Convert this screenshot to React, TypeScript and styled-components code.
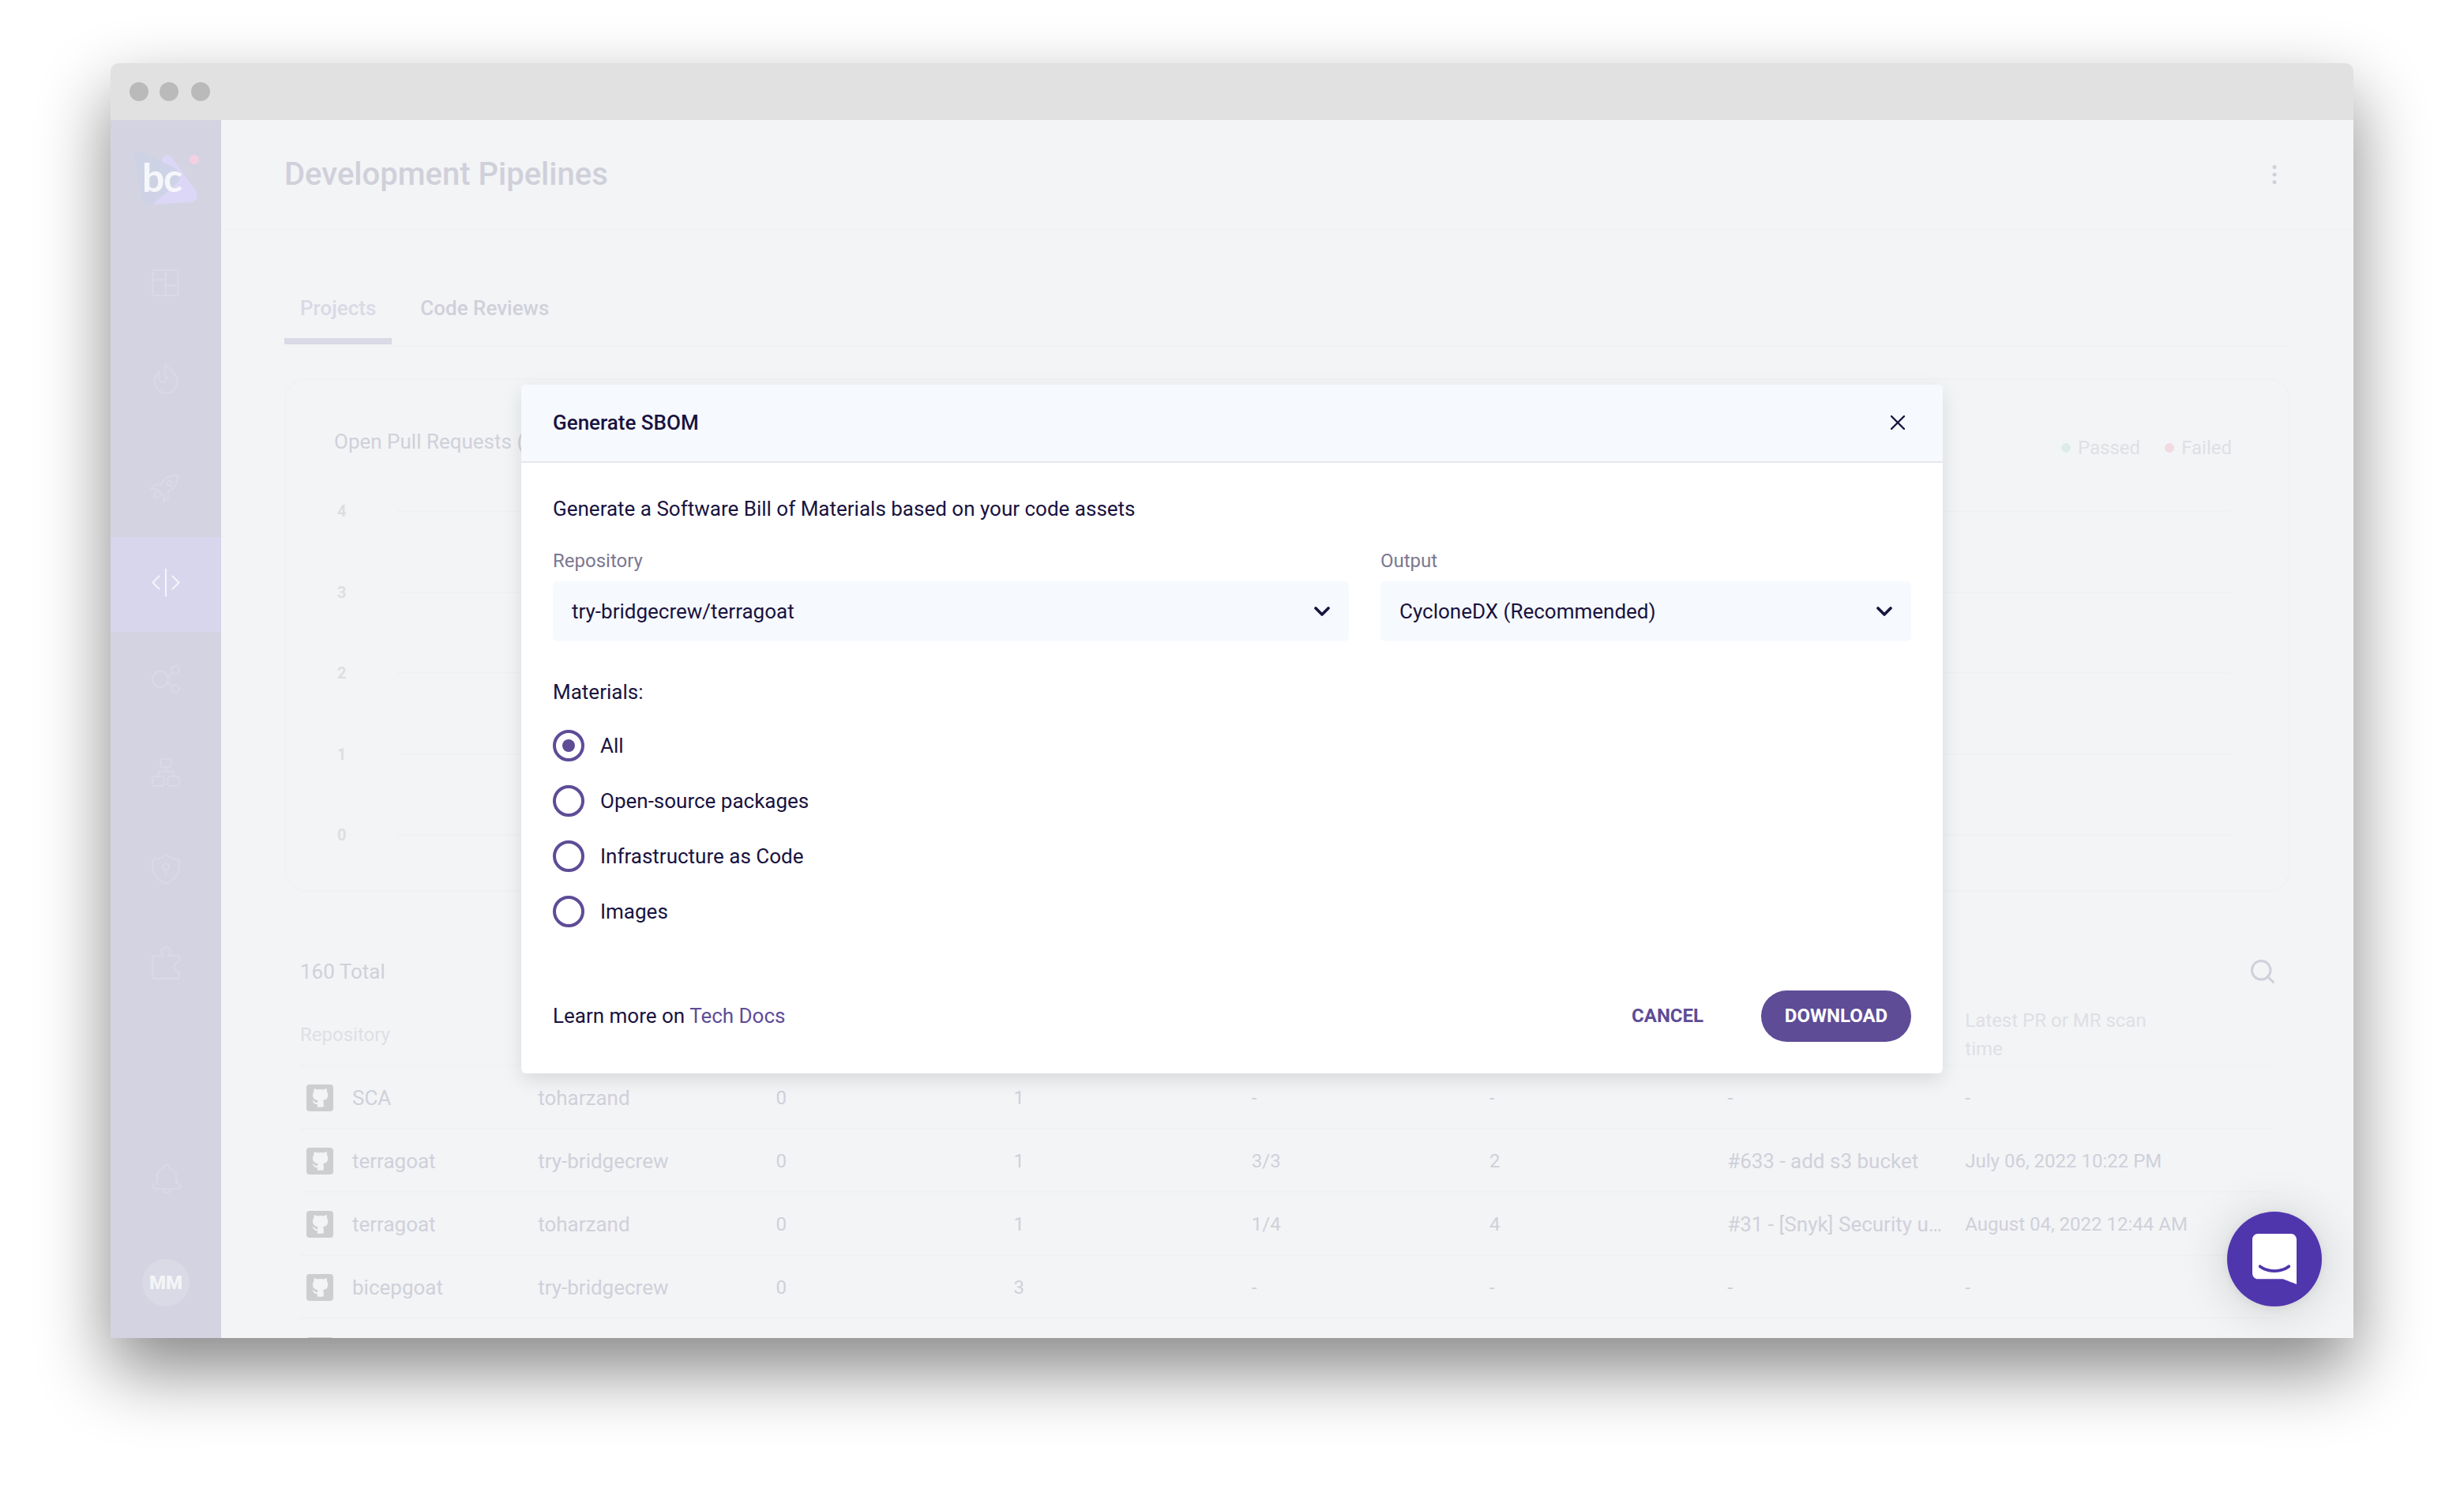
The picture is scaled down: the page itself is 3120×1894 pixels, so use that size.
import React, { useState } from "react";
import styled, { createGlobalStyle } from "styled-components";

const GlobalStyle = createGlobalStyle`
    *{
        box-sizing: border-box;
    }

    body{
        margin: 0;
        background: #ffffff;
        font-family: Roboto, "Liberation Sans", sans-serif;
        font-size: 26px;
        line-height: 36px;
        overflow: hidden;
    }

    button{
        font-family: inherit;
        border: none;
        background: none;
        padding: 0;
        cursor: pointer;
    }
`;

const Page = styled.div`
    height: 1894px;
    padding: 80px 140px 200px;
    background: #ffffff;
`;

const BrowserWindow = styled.div`
    display: flex;
    flex-direction: column;
    height: 1614px;
    border-radius: 10px 10px 0 0;
    box-shadow: 0 40px 90px rgba(0, 0, 0, 0.48);
`;

const TitleBar = styled.div`
    display: flex;
    align-items: center;
    height: 72px;
    padding-left: 24px;
    background: #e1e1e1;
    border-radius: 10px 10px 0 0;
`;

const WindowDot = styled.span`
    width: 24px;
    height: 24px;
    margin-right: 14px;
    border-radius: 50%;
    background: #bababa;

    &:last-child{
        margin-left: 2px;
    }
`;

const Screen = styled.div`
    position: relative;
    display: flex;
    flex: 1;
    min-height: 0;
    overflow: hidden;
    background: #f3f4f6;
`;

const Sidebar = styled.nav`
    display: flex;
    flex-direction: column;
    align-items: center;
    width: 140px;
    height: 1542px;
    flex-shrink: 0;
    background: #d4d3e1;
`;

const LogoBox = styled.div`
    width: 84px;
    height: 146px;
    padding-top: 38px;
`;

const SideItem = styled.div<{ $active?: boolean; $after?: number }>`
    display: flex;
    align-items: center;
    justify-content: center;
    width: 140px;
    height: 120px;
    flex-shrink: 0;
    margin-bottom: ${({ $after }) => $after || 0}px;
    color: ${({ $active }) => ($active ? "#f4f4f9" : "#dad9e7")};
    background: ${({ $active }) => ($active ? "#d8d6ec" : "transparent")};
`;

const SideIcon = styled.svg`
    display: block;
    fill: none;
    stroke: currentColor;
    stroke-width: 2.2;
    stroke-linejoin: round;
    stroke-linecap: round;
    overflow: visible;
`;

const Avatar = styled.div`
    display: flex;
    align-items: center;
    justify-content: center;
    width: 60px;
    height: 60px;
    margin-top: 41px;
    border-radius: 50%;
    background: #dad9e6;
    color: #f3f4f6;
    font-size: 24px;
    font-weight: 900;
`;

const Main = styled.main`
    flex: 1;
    min-width: 0;
    height: 1542px;
    overflow: hidden;
    color: #d0d0da;
`;

const PageHeader = styled.header`
    display: flex;
    align-items: center;
    justify-content: space-between;
    height: 140px;
    padding: 0 97px 0 80px;
    border-bottom: 2px solid #f1f2f4;
`;

const Title = styled.h1`
    margin: 0;
    font-size: 40px;
    font-weight: 500;
    line-height: 48px;
`;

const Content = styled.div`
    padding: 80px 80px 0;
`;

const Tabs = styled.div`
    display: flex;
    gap: 16px;
    padding-bottom: 1px;
    border-bottom: 2px solid #f0f1f3;
`;

const Tab = styled.div<{ $active?: boolean }>`
    padding: 0 20px 20px;
    font-weight: 500;
    color: ${({ $active }) => ($active ? "#dad9e6" : "#d0d0da")};
    border-bottom: 8px solid ${({ $active }) => ($active ? "#dad9e6" : "transparent")};
`;

const ChartCard = styled.section`
    height: 650px;
    margin-top: 40px;
    padding: 60px 72px 0 61px;
    border: 2px solid #f0f1f3;
    border-radius: 28px;
`;

const ChartHead = styled.div`
    display: flex;
    align-items: flex-start;
    justify-content: space-between;
    height: 54.75px;
`;

const Legend = styled.div`
    display: flex;
    gap: 31px;
    padding-top: 8px;
    font-size: 24px;
    color: #dfdfe5;
`;

const LegendItem = styled.span<{ $dot: string }>`
    display: flex;
    align-items: center;
    gap: 9px;

    &::before{
        content: "";
        width: 12px;
        height: 12px;
        border-radius: 50%;
        background: ${({ $dot }) => $dot};
    }
`;

const AxisRow = styled.div`
    display: flex;
    align-items: center;
    height: 102.5px;
    padding-left: 4px;
    font-size: 20px;
    font-weight: 700;
    color: #dddee1;

    &::after{
        content: "";
        flex: 1;
        height: 2px;
        background: #f0f1f3;
    }
`;

const AxisLabel = styled.span`
    width: 76px;
`;

const ListSection = styled.section`
    margin-top: 83px;
    padding: 0 20px;
`;

const ListBar = styled.div`
    display: flex;
    align-items: center;
    justify-content: space-between;
    height: 36px;
    margin-bottom: 24px;
`;

const Row = styled.div<{ $head?: boolean }>`
    display: grid;
    grid-template-columns: repeat(8, 301.2px);
    align-items: center;
    height: ${({ $head }) => ($head ? 78 : 80)}px;
    border-bottom: 2px solid #f0f1f3;
    font-size: ${({ $head }) => ($head ? 24 : 26)}px;
    color: ${({ $head }) => ($head ? "#dfdfe5" : "#d0d0da")};
`;

const Cell = styled.span<{ $small?: boolean }>`
    padding-top: 2px;
    white-space: nowrap;
    font-size: ${({ $small }) => ($small ? "24px" : "inherit")};
`;

const HeadCell = styled.span<{ $column: number }>`
    grid-column: ${({ $column }) => $column};
    padding-right: 50px;
`;

const RepoCell = styled.span`
    display: flex;
    align-items: center;
    gap: 24px;
    padding: 2px 0 0 8px;
`;

const Overlay = styled.div`
    position: absolute;
    inset: 0;
    display: flex;
    align-items: center;
    justify-content: center;
`;

const Modal = styled.div`
    width: 1800px;
    border-radius: 6px;
    background: #ffffff;
    color: #19133f;
    box-shadow: 0 8px 24px rgba(0, 0, 0, 0.11);
`;

const ModalHeader = styled.div`
    display: flex;
    align-items: center;
    justify-content: space-between;
    height: 99px;
    padding: 0 48px 1px 40px;
    border-radius: 6px 6px 0 0;
    border-bottom: 2px solid #e5e7ec;
    background: #f6f9fe;
    font-weight: 500;
`;

const CloseButton = styled.button`
    display: flex;
    color: inherit;
`;

const ModalBody = styled.div`
    padding: 40px;
`;

const Fields = styled.div`
    display: grid;
    grid-template-columns: 1008px 672px;
    column-gap: 40px;
    margin-top: 34px;
    width: 1720px;
`;

const FieldLabel = styled.div`
    margin-bottom: 12px;
    font-size: 24px;
    line-height: 28px;
    color: #7b7892;
`;

const SelectBox = styled.div`
    display: flex;
    align-items: center;
    justify-content: space-between;
    height: 76px;
    padding: 0 24px;
    border-radius: 6px;
    background: #f6f9fe;
`;

const Materials = styled.div`
    margin: 46px 0 30px;
`;

const RadioList = styled.div`
    display: flex;
    flex-direction: column;
    gap: 30px;
`;

const RadioRow = styled.div`
    display: flex;
    align-items: center;
    gap: 20px;
    height: 40px;
    cursor: pointer;
`;

const RadioCircle = styled.span<{ $checked: boolean }>`
    display: flex;
    align-items: center;
    justify-content: center;
    width: 40px;
    height: 40px;
    border: 4px solid #5e4c97;
    border-radius: 50%;

    &::after{
        content: "";
        width: 16px;
        height: 16px;
        border-radius: 50%;
        background: ${({ $checked }) => ($checked ? "#5e4c97" : "transparent")};
    }
`;

const ModalFooter = styled.div`
    display: flex;
    align-items: center;
    justify-content: space-between;
    height: 65px;
    margin-top: 80px;
`;

const FooterText = styled.span`
    padding-bottom: 1px;
`;

const DocsLink = styled.span`
    color: #5e4c97;
`;

const Actions = styled.div`
    display: flex;
    align-items: center;
    gap: 73px;
`;

const CancelButton = styled.button`
    padding-bottom: 1px;
    font-size: 24px;
    font-weight: 700;
    color: #5e4c97;
`;

const DownloadButton = styled.button`
    width: 190px;
    height: 65px;
    padding-bottom: 1px;
    border-radius: 33px;
    background: #5e4c97;
    color: #ffffff;
    font-size: 24px;
    font-weight: 700;
`;

const ChatButton = styled.button`
    position: absolute;
    right: 40px;
    bottom: 40px;
    display: flex;
    align-items: center;
    justify-content: center;
    width: 120px;
    height: 120px;
    border-radius: 50%;
    background: #5036ad;
    box-shadow: 0 2px 12px rgba(0, 0, 0, 0.06), 0 4px 64px rgba(0, 0, 0, 0.16);
`;

const Logo = () => (
    <svg width="84" height="72" viewBox="0 0 84 72">
        <path d="M37 12C40 5 47 5 51 11L79 50C84 57 82 64 74 66L26 69Z" fill="#dcd7f6" />
        <path d="M2 10C2 3 8 1 15 4L52 22C61 27 62 35 56 42L28 66C22 71 14 69 12 61Z" fill="#cbd2e4" fillOpacity="0.85" />
        <text x="12" y="53" fontFamily="Lato, sans-serif" fontWeight="700" fontSize="50" letterSpacing="-1.5" fill="#f6f7fb">bc</text>
        <circle cx="78" cy="12" r="6" fill="#f5d0e0" />
    </svg>
);

const GithubBadge = () => (
    <svg width="34" height="34" viewBox="0 0 34 34">
        <rect width="34" height="34" rx="4" fill="#cdcecf" />
        <path d="M10 5.2C11 5.2 12.2 5.7 13.2 6.4Q17.7 5.6 22.2 6.4C23.2 5.7 24.4 5.2 25.6 5.2Q26.4 7.4 26 9.2C27 10.6 27.4 12 27.2 14C27 18 24.6 19.7 20.8 20.3Q21.8 21.3 21.8 23V28.2Q17.7 29.3 13.8 28.6V25C11 25.4 10 24.4 9.2 22.8Q8.4 21.4 6.8 20.8C8.8 20 10 21 10.8 22.2Q12 23.4 14 22.8Q14 21.3 14.8 20.3C11 19.7 8.2 18 8 14C7.8 12 8.4 10.6 9.4 9.2Q9.2 7 10 5.2Z" fill="#f3f4f6" />
    </svg>
);

const Chevron = () => (
    <svg width="20" height="12" viewBox="0 0 20 12">
        <path d="M2 2L10 10L18 2" fill="none" stroke="#19133f" strokeWidth="3.6" strokeLinecap="round" strokeLinejoin="round" />
    </svg>
);

const rows = [
    ["SCA", "toharzand", "0", "1", "-", "-", "-", "-"],
    ["terragoat", "try-bridgecrew", "0", "1", "3/3", "2", "#633 - add s3 bucket", "July 06, 2022 10:22 PM"],
    ["terragoat", "toharzand", "0", "1", "1/4", "4", "#31 - [Snyk] Security u…", "August 04, 2022 12:44 AM"],
    ["bicepgoat", "try-bridgecrew", "0", "3", "-", "-", "-", "-"],
    ["", "", "", "", "", "", "", ""],
];

const materials = ["All", "Open-source packages", "Infrastructure as Code", "Images"];

// owner and PR name keep the row size, the other cells are smaller
const largeCells = [0, 5];

const SideMenu = () => (
    <Sidebar>
        <LogoBox><Logo /></LogoBox>
        <SideItem $after={2}>
            <SideIcon width="36" height="36" viewBox="0 0 36 36">
                <rect x="1.5" y="2" width="32" height="32" rx="1.5" />
                <path d="M17.7 2V33M2 14.3H17.7M17.7 21.3H33" />
            </SideIcon>
        </SideItem>
        <SideItem $after={20}>
            <SideIcon width="36" height="40" viewBox="0 0 36 40">
                <path d="M18 2c-1 3-3 7-1.5 11 1 2 2.5 3.5 2.5 6a5 5 0 0 1-10 0c0-3 1-5 .8-8.5C6 13 3.6 18 3.6 23a14.6 14.6 0 0 0 29.2 0C32.8 16 27 11 23 7 20.5 4.5 19 3.5 18 2z" />
            </SideIcon>
        </SideItem>
        <SideItem>
            <SideIcon width="40" height="40" viewBox="0 -1 40 40">
                <path d="M35 1C26 .5 18 3 14 12.7L7.5 12 1 18C6 17.6 9 18.6 11.5 20.5L17.5 26.3V34.5L23 28.5V21C31 17.5 35.500 10 35 1z" />
                <circle cx="24.7" cy="11" r="3" />
                <path d="M10 20.700C7 22 5 25 5.500 29.500 10 29.500 13 28 14 24" />
            </SideIcon>
        </SideItem>
        <SideItem $active>
            <SideIcon width="36" height="40" viewBox="0 0 36 40">
                <path d="M9.5 9.5l-8 8 8 8M26.5 9.5l8 8-8 8M18 .8V34.5" />
            </SideIcon>
        </SideItem>
        <SideItem>
            <SideIcon width="36" height="36" viewBox="0 0 36 36">
                <circle cx="11" cy="18" r="10" />
                <circle cx="30" cy="6" r="5" />
                <circle cx="30" cy="30" r="5" />
                <path d="M20.5 15L26.5 9.7M20 21.8L26.5 27" />
            </SideIcon>
        </SideItem>
        <SideItem>
            <SideIcon width="36" height="40" viewBox="0 0 36 40">
                <rect x="11.5" y="1" width="13" height="10.5" rx="2.5" />
                <rect x="1" y="23" width="14.5" height="12" rx="2.5" />
                <rect x="20.5" y="23" width="14.5" height="12" rx="2.5" />
                <path d="M18 12V17M8.3 22.5V17H28V22.5" />
            </SideIcon>
        </SideItem>
        <SideItem>
            <SideIcon width="36" height="40" viewBox="0 0 36 40">
                <path d="M18 1.5C14 5.5 10 8 3 8a2 2 0 0 0-2 2V16C1 28 9 35 18 38.5 27 35 35 28 35 16V10a2 2 0 0 0-2-2C26 8 22 5.5 18 1.5z" />
                <circle cx="18" cy="17.3" r="4" />
                <path d="M18 21.5V28" />
            </SideIcon>
        </SideItem>
        <SideItem $after={153}>
            <SideIcon width="36" height="40" viewBox="0 0 36 40">
                <path d="M1 12a2 2 0 0 1 2-2H14.7A5.9 5.9 0 1 1 21.3 10H33a2 2 0 0 1 2 2V17.5C26.6 19.5 26.6 29.8 35 31.5V37a2 2 0 0 1-2 2H3a2 2 0 0 1-2-2z" />
            </SideIcon>
        </SideItem>
        <SideItem>
            <SideIcon width="36" height="40" viewBox="0 0 36 40">
                <path d="M15.5 6C15.5 .2 22.5 .2 22.5 6 28 7.5 31 11.5 31 17V24.5C34 24.5 36 26 36 28.5S34 32 32 32H6C3.5 32 2 30.5 2 28.5S4 24.5 7 24.5V17C7 11.5 10 7.5 15.5 6z" />
                <path d="M14.5 33a4.5 4.5 0 0 0 9 0" />
            </SideIcon>
        </SideItem>
        <Avatar>MM</Avatar>
    </Sidebar>
);

const Pipelines = () => (
    <Main>
        <PageHeader>
            <Title>Development Pipelines</Title>
            <svg width="6" height="26" viewBox="0 0 6 26" fill="#d0d0da">
                <circle cx="3" cy="3.4" r="2.5" />
                <circle cx="3" cy="13" r="2.5" />
                <circle cx="3" cy="22.6" r="2.5" />
            </svg>
        </PageHeader>
        <Content>
            <Tabs>
                <Tab $active>Projects</Tab>
                <Tab>Code Reviews</Tab>
            </Tabs>
            <ChartCard>
                <ChartHead>
                    <span>Open Pull Requests (</span>
                    <Legend>
                        <LegendItem $dot="#dcede9">Passed</LegendItem>
                        <LegendItem $dot="#f1dae0">Failed</LegendItem>
                    </Legend>
                </ChartHead>
                {[4, 3, 2, 1, 0].map((tick) => (
                    <AxisRow key={tick}><AxisLabel>{tick}</AxisLabel></AxisRow>
                ))}
            </ChartCard>
            <ListSection>
                <ListBar>
                    <span>160 Total</span>
                    <svg width="30" height="30" viewBox="0 0 30 30" fill="none" stroke="#d0d0da" strokeWidth="3" strokeLinecap="round">
                        <circle cx="13.2" cy="13.3" r="11.8" />
                        <path d="M22 22L28.5 28.5" />
                    </svg>
                </ListBar>
                <Row $head>
                    <HeadCell $column={1}>Repository</HeadCell>
                    <HeadCell $column={8}>Latest PR or MR scan time</HeadCell>
                </Row>
                {rows.map(([repo, ...cells], index) => (
                    <Row key={index}>
                        <RepoCell><GithubBadge />{repo}</RepoCell>
                        {cells.map((cell, i) => (
                            <Cell key={i} $small={!largeCells.includes(i)}>{cell}</Cell>
                        ))}
                    </Row>
                ))}
            </ListSection>
        </Content>
    </Main>
);

const SbomModal = () => {

    const [material, setMaterial] = useState("All");

    return (
        <Modal>
            <ModalHeader>
                <span>Generate SBOM</span>
                <CloseButton aria-label="Close">
                    <svg width="18" height="18" viewBox="0 0 18 18">
                        <path d="M1 1L17 17M17 1L1 17" stroke="currentColor" strokeWidth="2.4" strokeLinecap="round" />
                    </svg>
                </CloseButton>
            </ModalHeader>
            <ModalBody>
                <div>Generate a Software Bill of Materials based on your code assets</div>
                <Fields>
                    <div>
                        <FieldLabel>Repository</FieldLabel>
                        <SelectBox>try-bridgecrew/terragoat<Chevron /></SelectBox>
                    </div>
                    <div>
                        <FieldLabel>Output</FieldLabel>
                        <SelectBox>CycloneDX (Recommended)<Chevron /></SelectBox>
                    </div>
                </Fields>
                <Materials>Materials:</Materials>
                <RadioList>
                    {materials.map((name) => (
                        <RadioRow key={name} onClick={() => setMaterial(name)}>
                            <RadioCircle $checked={material === name} />
                            {name}
                        </RadioRow>
                    ))}
                </RadioList>
                <ModalFooter>
                    <FooterText>Learn more on <DocsLink>Tech Docs</DocsLink></FooterText>
                    <Actions>
                        <CancelButton>CANCEL</CancelButton>
                        <DownloadButton>DOWNLOAD</DownloadButton>
                    </Actions>
                </ModalFooter>
            </ModalBody>
        </Modal>
    );
};

export default function App() {
    return (
        <Page>
            <GlobalStyle />
            <BrowserWindow>
                <TitleBar>
                    <WindowDot />
                    <WindowDot />
                    <WindowDot />
                </TitleBar>
                <Screen>
                    <SideMenu />
                    <Pipelines />
                    <Overlay><SbomModal /></Overlay>
                    <ChatButton aria-label="Open chat">
                        <svg width="56" height="64" viewBox="0 0 28 32">
                            <path fill="#ffffff" d="M28 32s-4.714-1.855-8.527-3.34H3.437C1.54 28.66 0 27.026 0 25.013V3.644C0 1.633 1.54 0 3.437 0h21.125c1.898 0 3.437 1.632 3.437 3.645v18.404H28V32zm-4.139-11.982a.88.88 0 00-1.292-.105c-.03.026-3.015 2.681-8.57 2.681-5.486 0-8.517-2.636-8.571-2.684a.88.88 0 00-1.29.107 1.01 1.01 0 00-.219.708.992.992 0 00.318.664c.142.128 3.537 3.15 9.762 3.15 6.226 0 9.621-3.022 9.763-3.15a.992.992 0 00.317-.664 1.01 1.01 0 00-.218-.707z" />
                        </svg>
                    </ChatButton>
                </Screen>
            </BrowserWindow>
        </Page>
    );
}
